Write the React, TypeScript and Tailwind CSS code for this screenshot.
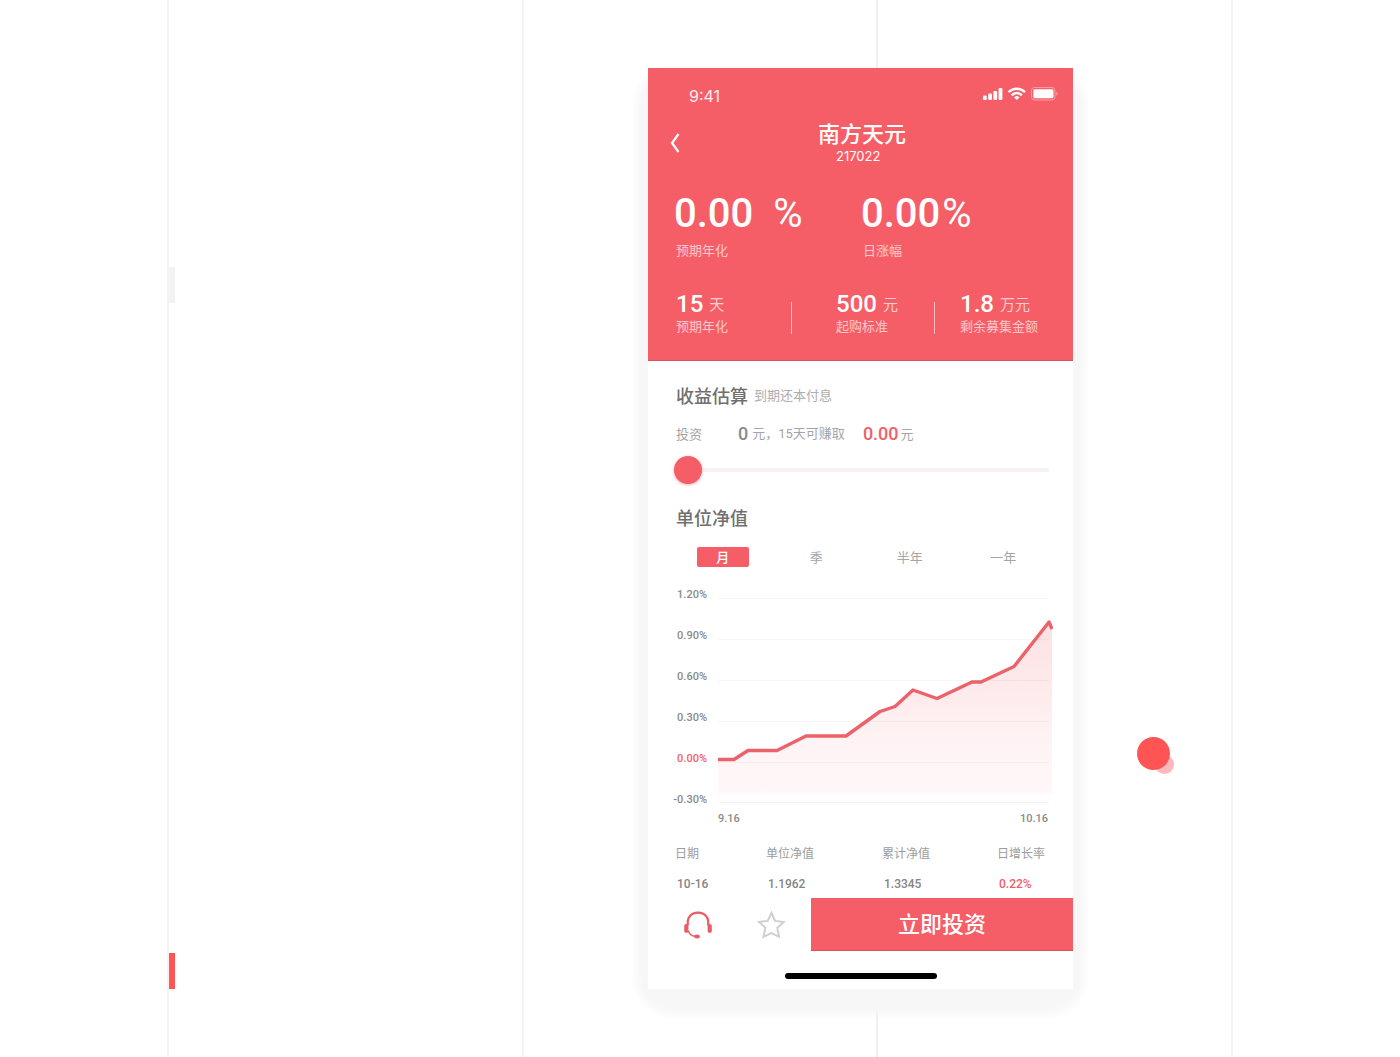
import { useState } from "react";

const RANGES = ["月", "季", "半年", "一年"];
const Y_LABELS = ["1.20%", "0.90%", "0.60%", "0.30%", "0.00%", "-0.30%"];
const GRID_LINES = [6, 47, 88, 129, 170, 210];
const LINE =
  "0,167.5 16,167.5 30,158.5 59,158.5 88,144 128,144 162,119.5 177,114.5 195,98 219,106.5 254,90 263,90 296,74.5 331,30 334,37";

function StatusBar() {
  return (
    <div className="flex h-[52px] items-start justify-between pt-[18px] pr-[15px] pl-[41px]">
      <span className="font-['Inter',sans-serif] text-base leading-5 text-white/90">9:41</span>
      <svg width="76" height="16" viewBox="0 0 76 16" fill="white" aria-hidden="true">
        <rect x="1" y="9.5" width="3.8" height="4.5" rx="1.2" />
        <rect x="6.2" y="7.5" width="3.8" height="6.5" rx="1.2" />
        <rect x="11.4" y="5" width="3.8" height="9" rx="1.2" />
        <rect x="16.6" y="2" width="3.8" height="12" rx="1.2" />
        <g fill="none" stroke="white" strokeWidth="2.5">
          <path d="M26.6 6.2a11.4 11.4 0 0 1 16.4 0" />
          <path d="M29.7 9.3a7 7 0 0 1 10.2 0" />
        </g>
        <path d="M34.8 14l-2.7-2.6a3.8 3.8 0 0 1 5.4 0z" />
        <rect x="49.5" y="1.5" width="23.5" height="12.5" rx="3" fill="none" stroke="white" strokeOpacity="0.4" />
        <rect x="51.3" y="3.3" width="20.2" height="9" rx="1.5" />
        <path d="M74.3 5.8v4q1.5-.5 1.5-2t-1.5-2z" fillOpacity="0.4" />
      </svg>
    </div>
  );
}

function Fact({ value, unit, label }: { value: string; unit: string; label: string }) {
  return (
    <div className="whitespace-nowrap">
      <p className="flex h-7 items-center gap-1.5">
        <span className="font-['Roboto',sans-serif] text-2xl leading-7 font-medium">{value}</span>
        <span className="text-[15px] leading-7 text-white/70">{unit}</span>
      </p>
      <p className="text-[13px] leading-4 text-white/65">{label}</p>
    </div>
  );
}

function Header() {
  return (
    <header className="border-b border-[#d9545e] bg-[#f55d67] pb-[26px] text-white">
      <StatusBar />
      <div className="flex items-center pl-5">
        <button type="button" aria-label="返回" className="p-0.5">
          <svg width="10" height="20" viewBox="0 0 10 20" fill="none" stroke="white" strokeWidth="2.2">
            <path d="M8.5 1L2 10l6.5 9" />
          </svg>
        </button>
        <div className="ml-[136px]">
          <h1 className="mb-0.5 text-[22px] leading-6 font-medium">南方天元</h1>
          <p className="pl-[18px] font-['Inter',sans-serif] text-[13px] leading-5">217022</p>
        </div>
      </div>

      <div className="mt-7 grid grid-cols-[187px_1fr] pl-[26px]">
        <div>
          <p className="flex gap-5 font-['Roboto',sans-serif] text-[40px] leading-10 font-medium">
            0.00<span className="font-normal">%</span>
          </p>
          <p className="mt-1.5 pl-0.5 text-[13px] leading-5 text-white/65">预期年化</p>
        </div>
        <div>
          <p className="flex gap-0.5 font-['Roboto',sans-serif] text-[40px] leading-10 font-medium">
            0.00<span className="font-normal">%</span>
          </p>
          <p className="mt-1.5 pl-0.5 text-[13px] leading-5 text-white/65">日涨幅</p>
        </div>
      </div>

      <div className="mt-[30px] grid grid-cols-[115px_45px_98px_26px_1fr] items-end pl-7">
        <Fact value="15" unit="天" label="预期年化" />
        <div className="h-8 border-l border-white/60" />
        <Fact value="500" unit="元" label="起购标准" />
        <div className="h-8 border-l border-white/60" />
        <Fact value="1.8" unit="万元" label="剩余募集金额" />
      </div>
    </header>
  );
}

function Estimate() {
  const [amount, setAmount] = useState(0);

  return (
    <section className="pt-[22px] pr-[22px] pl-7">
      <div className="flex items-center gap-1.5 leading-6">
        <h2 className="text-lg leading-6 font-medium text-[#6f6f6f]">收益估算</h2>
        <span className="text-[13px] text-[#adadad]">到期还本付息</span>
      </div>
      <div className="mt-[15px] flex items-center text-[13px] leading-6 whitespace-nowrap text-[#a5a5a5]">
        <label htmlFor="amount">投资</label>
        <span className="ml-9 font-['Roboto',sans-serif] text-lg leading-6 font-medium text-[#8a8a8a]">{amount}</span>
        <span className="ml-1 font-['Roboto','Noto_Sans_CJK_SC',sans-serif]">元，15天可赚取</span>
        <span className="ml-[18px] font-['Roboto',sans-serif] text-lg leading-6 font-medium text-[#f55d67]">0.00</span>
        <span className="ml-0.5">元</span>
      </div>
      <input
        id="amount"
        type="range"
        min={0}
        max={10000}
        value={amount}
        onChange={(e) => setAmount(Number(e.target.value))}
        className="mt-2.5 -ml-0.5 block h-7 w-full appearance-none bg-transparent [&::-webkit-slider-runnable-track]:h-1 [&::-webkit-slider-runnable-track]:rounded-full [&::-webkit-slider-runnable-track]:bg-[#f9f0f1] [&::-webkit-slider-thumb]:-mt-3 [&::-webkit-slider-thumb]:size-7 [&::-webkit-slider-thumb]:appearance-none [&::-webkit-slider-thumb]:rounded-full [&::-webkit-slider-thumb]:bg-[#f55d67] [&::-webkit-slider-thumb]:shadow-[0_1px_3px_#f65d6780]"
      />
    </section>
  );
}

function Chart() {
  return (
    <div className="mt-5 pr-5">
      <div className="flex items-start gap-[11px]">
        <ul className="-ml-1 flex w-[35px] flex-col text-right font-['Roboto',sans-serif] text-[11px] font-medium text-[#8a8a8a]">
          {Y_LABELS.map((label) => (
            <li key={label} className={label === "0.00%" ? "h-[41px] leading-4 text-[#f55d67]" : "h-[41px] leading-4"}>
              {label}
            </li>
          ))}
        </ul>
        <svg viewBox="0 0 335 216" className="mt-[5px] h-[216px] min-w-0 flex-1" preserveAspectRatio="none" aria-hidden="true">
          <defs>
            <linearGradient id="area" x1="0" y1="30" x2="0" y2="204" gradientUnits="userSpaceOnUse">
              <stop offset="0" stopColor="#f65d67" stopOpacity="0.19" />
              <stop offset="0.5" stopColor="#f65d67" stopOpacity="0.11" />
              <stop offset="0.7" stopColor="#f65d67" stopOpacity="0.07" />
              <stop offset="0.97" stopColor="#f65d67" stopOpacity="0.05" />
              <stop offset="1" stopColor="#f65d67" stopOpacity="0" />
            </linearGradient>
          </defs>
          {GRID_LINES.map((y) => (
            <path key={y} d={`M0 ${y + 0.5}H331`} stroke="#f5f5f5" />
          ))}
          <polygon points={`${LINE} 334,204 0,204`} fill="url(#area)" />
          <polyline points={LINE} fill="none" stroke="#ec626b" strokeWidth="3.4" strokeLinejoin="round" />
        </svg>
      </div>
    </div>
  );
}

function NetValue() {
  const [range, setRange] = useState("月");

  return (
    <section className="pt-[21px] pl-7">
      <h2 className="text-lg leading-6 font-medium text-[#6f6f6f]">单位净值</h2>
      <div className="mt-[18px] mr-[23px] grid grid-cols-4 justify-items-center">
        {RANGES.map((r) => (
          <button
            key={r}
            type="button"
            onClick={() => setRange(r)}
            className={
              r === range
                ? "h-5 w-[52px] rounded-xs bg-[#f55d67] text-[13px] leading-4 font-medium text-white"
                : "h-5 w-[52px] text-[13px] leading-4 text-[#a5a5a5]"
            }
          >
            {r}
          </button>
        ))}
      </div>
      <Chart />
    </section>
  );
}

function History() {
  return (
    <table className="ml-[27px] w-[376px] table-fixed text-left text-xs">
      <colgroup>
        <col className="w-[91px]" />
        <col className="w-[116px]" />
        <col className="w-[115px]" />
        <col />
      </colgroup>
      <thead>
        <tr className="h-8 text-[#9c9c9c]">
          <th className="font-normal">日期</th>
          <th className="font-normal">单位净值</th>
          <th className="font-normal">累计净值</th>
          <th className="font-normal">日增长率</th>
        </tr>
      </thead>
      <tbody className="font-['Roboto',sans-serif] font-medium">
        <tr className="h-[29px] text-[#858585]">
          <td className="pl-0.5">10-16</td>
          <td className="pl-0.5">1.1962</td>
          <td className="pl-0.5">1.3345</td>
          <td className="pl-0.5 text-[#f55d67]">0.22%</td>
        </tr>
      </tbody>
    </table>
  );
}

function ActionBar() {
  return (
    <footer className="pb-2.5">
      <div className="flex h-[53px] items-center">
        <button type="button" aria-label="客服" className="ml-[35px]">
          <svg width="30" height="30" viewBox="0 0 30 30" fill="none" stroke="#ec5b65" aria-hidden="true">
            <path d="M5 15.5C3.5 8 8 2.7 15 2.7S26.5 8 25 15.5" strokeWidth="2.2" />
            <path d="M5.2 20.5Q6.5 26 12.5 26.4" strokeWidth="1.3" />
            <rect x="1.2" y="14" width="4.2" height="8.8" rx="1.9" fill="#ec5b65" stroke="none" />
            <rect x="24.6" y="14" width="4.2" height="8.8" rx="1.9" fill="#ec5b65" stroke="none" />
            <ellipse cx="14" cy="26.5" rx="2.9" ry="1.9" fill="#ec5b65" stroke="none" />
          </svg>
        </button>
        <button type="button" aria-label="收藏" className="ml-[43px]">
          <svg width="30" height="30" viewBox="0 0 30 30" fill="none" stroke="#cfcfcf" strokeWidth="2" aria-hidden="true">
            <path d="M15.5 3L19 10.9L27.7 11.9L21.3 17.8L23 26.8L15.5 23L7.5 26.8L9.4 17.8L3 11.9L11.7 10.9Z" />
          </svg>
        </button>
        <button
          type="button"
          className="ml-auto h-full w-[262px] border-b border-[#d9545e] bg-[#f55d67] pb-1 text-[22px] leading-none font-medium text-white"
        >
          立即投资
        </button>
      </div>
      <div className="mx-auto mt-[22px] h-1.5 w-[152px] rounded-full bg-black" />
    </footer>
  );
}

export default function App() {
  return (
    <div className="grid min-h-screen bg-white font-['Noto_Sans_CJK_SC',sans-serif]">
      {/* Guide lines behind the mockup */}
      <div className="col-start-1 row-start-1 mx-[167px] grid grid-cols-3 border-r-2 border-[#f4f4f4]">
        <div className="flex flex-col border-l-2 border-[#f4f4f4] pt-[267px]">
          <div className="h-9 w-1.5 bg-[#f3f3f3]" />
          <div className="mt-[650px] h-9 w-1.5 bg-[#ff5555]" />
        </div>
        <div className="border-l-2 border-[#f4f4f4]" />
        <div className="border-l-2 border-[#f0f0f0]" />
      </div>

      <div className="col-start-1 row-start-1 flex items-start justify-end pt-[68px]">
        <div className="w-full max-w-[425px] rounded-3xl shadow-[0_13px_8px_12px_#f7f7f7]">
          <main className="bg-white">
            <Header />
            <Estimate />
            <NetValue />
            <div className="-mt-[22px] mb-2.5 flex justify-between pr-[25px] pl-[70px] font-['Roboto',sans-serif] text-[11px] leading-4 font-medium text-[#8a8a8a]">
              <span>9.16</span>
              <span>10.16</span>
            </div>
            <History />
            <ActionBar />
          </main>
        </div>
        <div className="w-[327px] shrink-0 pt-[669px] pl-16">
          <svg width="38" height="38" viewBox="0 0 38 38" aria-hidden="true">
            <circle cx="27.5" cy="27.5" r="9.5" fill="#ffb8bb" />
            <circle cx="16.5" cy="16.5" r="16.5" fill="#ff5454" />
          </svg>
        </div>
      </div>
    </div>
  );
}
